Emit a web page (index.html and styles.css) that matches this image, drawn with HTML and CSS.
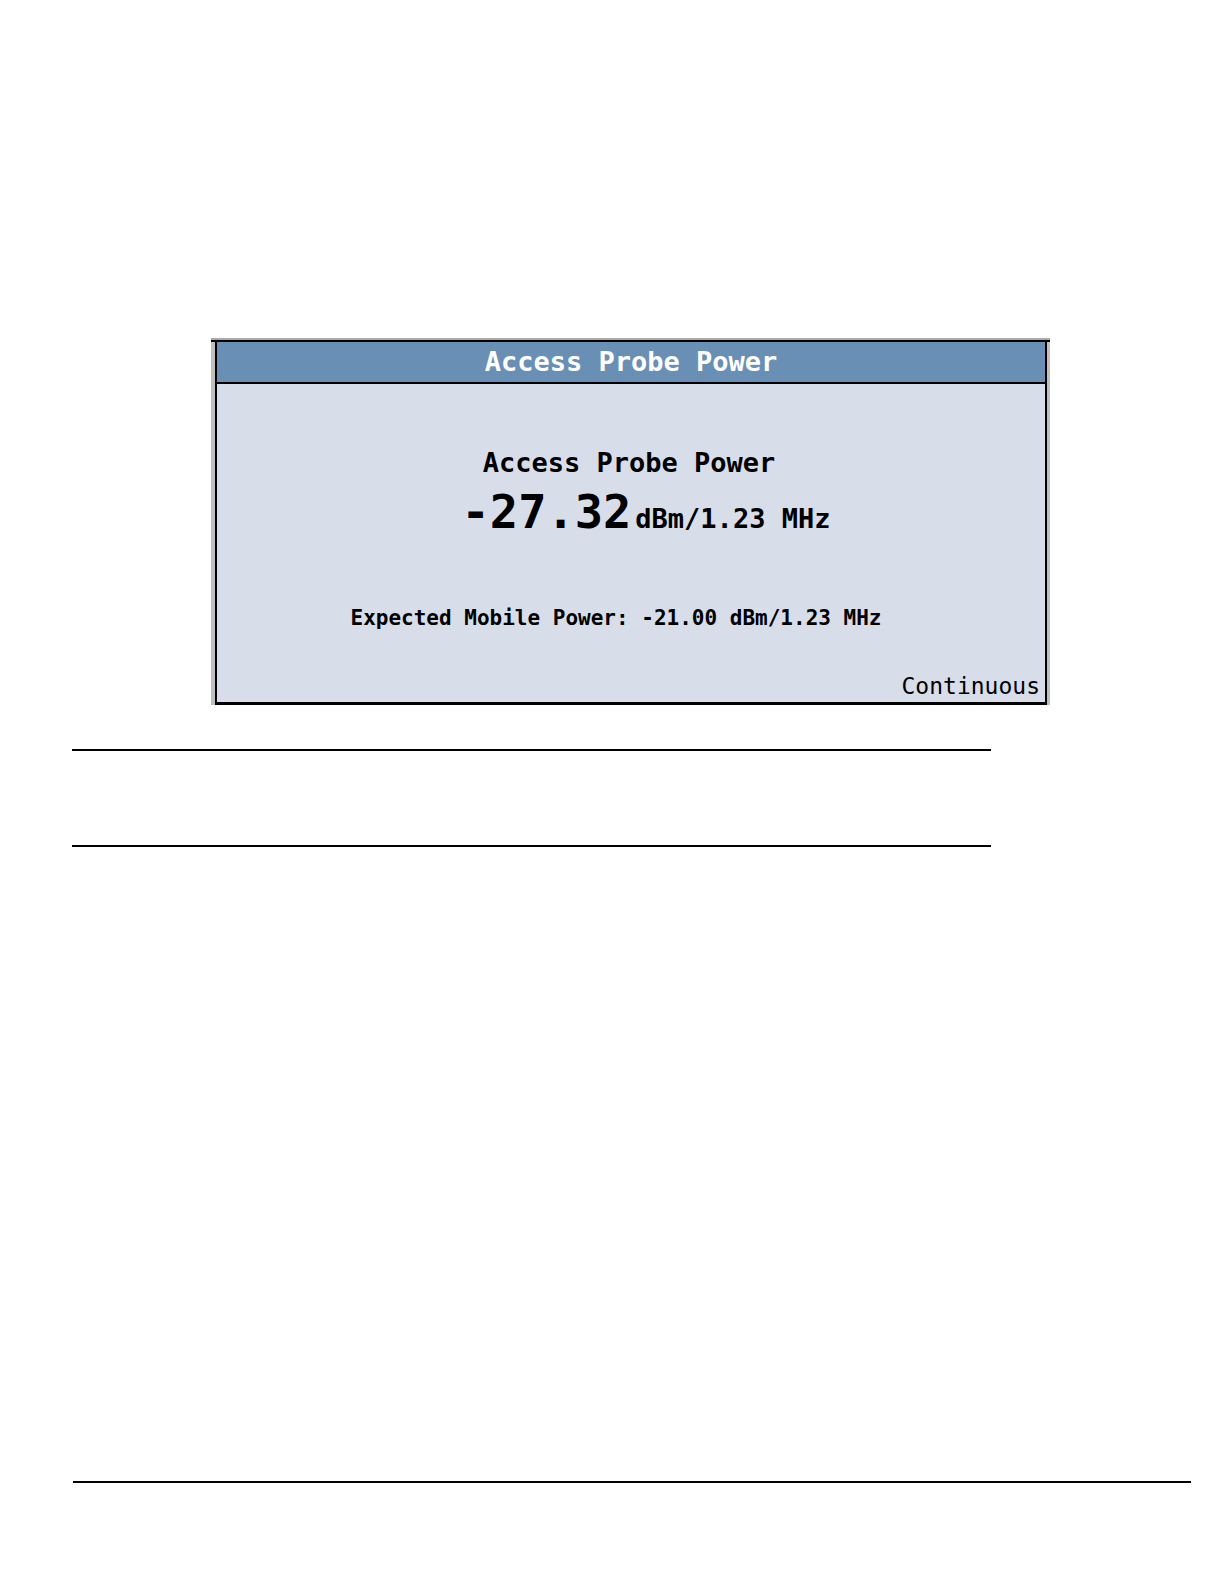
FILE: index.html
```html
<!DOCTYPE html>
<html lang="en">
<head>
<meta charset="UTF-8">
<meta name="viewport" content="width=device-width, initial-scale=1.0">
<title>Access Probe Power</title>
<link rel="stylesheet" href="styles.css">
</head>
<body>
  <main>
    <section class="screen">
      <div class="window">
        <h1 class="title">Access Probe Power</h1>
        <div class="content">
          <h2 class="label">Access Probe Power</h2>
          <p class="reading">
            <span class="value">-27.32</span>
            <span class="unit">dBm/1.23 MHz</span>
          </p>
          <p class="expected">Expected Mobile Power: -21.00 dBm/1.23 MHz</p>
          <p class="mode">Continuous</p>
        </div>
      </div>
    </section>
    <div class="note"></div>
  </main>
  <footer class="footer"></footer>
</body>
</html>
```

FILE: styles.css
```css
* {
  box-sizing: border-box;
}
body {
  display: flex;
  flex-direction: column;
  min-height: 100vh;
  margin: 0;
  background: #fff;
  color: #000;
  font-family: "DejaVu Sans Mono", "Liberation Mono", monospace;
}
h1, h2, p {
  margin: 0;
}
main {
  padding: 338px 174px 0 72px;
}

/* instrument screen */
.screen {
  margin-left: 139px;
  padding: 2px 0 0;
  background: #aaa;
}
.window {
  border-top: 2px solid #000;
  background: #bfbfbf;
  padding: 0 3px 0 4px;
}
.title {
  border: solid #000;
  border-width: 0 2px 2px;
  background: #6a8fb4;
  color: #fff;
  font-size: 27px;
  line-height: 40px;
  text-align: center;
}
.content {
  display: flex;
  flex-direction: column;
  border: solid #000;
  border-width: 0 2px 3px;
  background: #d8dee9;
  padding: 63px 5px 2px;
  font-weight: bold;
  text-align: center;
}
.label {
  padding-right: 4px;
  font-size: 27px;
  line-height: 32px;
}
.reading {
  display: flex;
  justify-content: center;
  align-items: baseline;
  gap: 4px;
  margin-top: 5px;
  padding-left: 30px;
  line-height: 56px;
}
.value {
  font-size: 47px;
}
.unit {
  font-size: 27px;
  line-height: 32px;
}
.expected {
  margin-top: 62px;
  padding-right: 30px;
  font-size: 21px;
  line-height: 32px;
}
.mode {
  margin-top: 38px;
  font-size: 23px;
  font-weight: normal;
  line-height: 28px;
  text-align: right;
}

/* ruled note area */
.note {
  height: 98px;
  margin: 44px 59px 0 0;
  border: solid #000;
  border-width: 2px 0;
}

.footer {
  margin: auto 33px 99px 73px;
  border-top: 2px solid #000;
}
```
